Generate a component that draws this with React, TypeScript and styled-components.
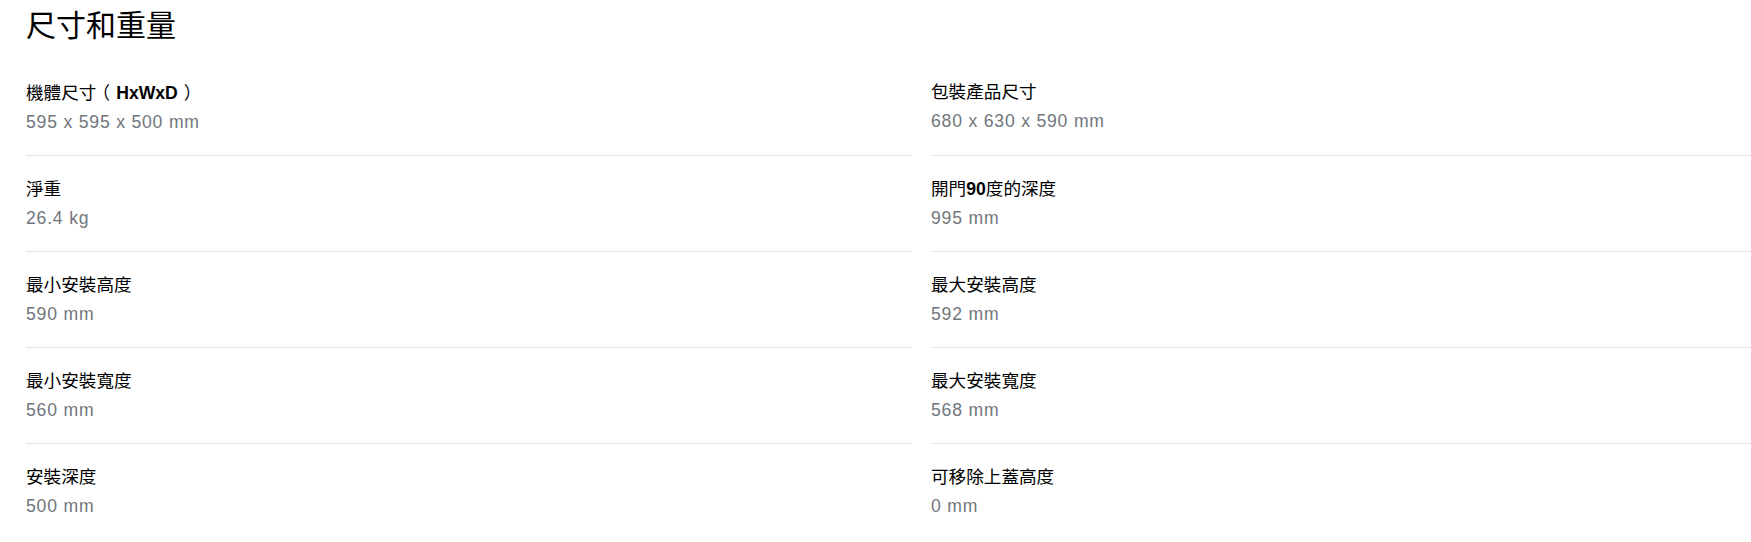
import styled, { createGlobalStyle } from "styled-components";

const GlobalStyle = createGlobalStyle`
  html, body {
    margin: 0;
    padding: 0;
    background: #fff;
    overflow: hidden;
  }
  body {
    font-family: "Liberation Sans", "Noto Sans CJK TC", sans-serif;
    color: #000;
  }
`;

const Section = styled.section`
  width: 1900px;
  padding: 6px 0 0 26px;
  box-sizing: border-box;
`;

const Title = styled.h2`
  margin: 0 0 13px;
  font-size: 30px;
  line-height: 40px;
  font-weight: 400;
  color: #000;
`;

const SpecGrid = styled.dl`
  display: grid;
  grid-template-columns: 885px 885px;
  column-gap: 20px;
  margin: 0;
`;

const SpecItem = styled.div<{ $last?: boolean }>`
  padding: 20px 0;
  border-bottom: ${(p) => (p.$last ? "none" : "1px solid #e0e2e5")};
  display: flex;
  flex-direction: column;
  gap: 3px;
`;

const Label = styled.dt`
  font-size: 17.6px;
  line-height: 26px;
  font-weight: 400;
  color: #000;
`;

const Strong = styled.b`
  font-weight: 700;
`;

// half-width bracket, padded so it sits centred like the reference
const Paren = styled.span<{ $close?: boolean }>`
  font-family: "Noto Sans CJK TC", sans-serif;
  font-feature-settings: "halt" 1;
  padding: ${(p) => (p.$close ? "0 0 0 6px" : "0 6px 0 5px")};
`;

const Value = styled.dd`
  margin: 0;
  font-size: 17.6px;
  line-height: 26px;
  color: #71767c;
  letter-spacing: 0.8px;
`;

type Spec = { label: React.ReactNode; value: string };

const specs: Spec[] = [
  {
    label: (
      <>
        機體尺寸<Paren>（</Paren>
        <Strong>HxWxD</Strong>
        <Paren $close>）</Paren>
      </>
    ),
    value: "595 x 595 x 500 mm",
  },
  { label: "包裝產品尺寸", value: "680 x 630 x 590 mm" },
  { label: "淨重", value: "26.4 kg" },
  {
    label: (
      <>
        開門<Strong>90</Strong>度的深度
      </>
    ),
    value: "995 mm",
  },
  { label: "最小安裝高度", value: "590 mm" },
  { label: "最大安裝高度", value: "592 mm" },
  { label: "最小安裝寬度", value: "560 mm" },
  { label: "最大安裝寬度", value: "568 mm" },
  { label: "安裝深度", value: "500 mm" },
  { label: "可移除上蓋高度", value: "0 mm" },
];

const App = () => {
  return (
    <>
      <GlobalStyle />
      <Section>
        <Title>尺寸和重量</Title>
        <SpecGrid>
          {specs.map((s, i) => (
            <SpecItem key={i} $last={i >= specs.length - 2}>
              <Label>{s.label}</Label>
              <Value>{s.value}</Value>
            </SpecItem>
          ))}
        </SpecGrid>
      </Section>
    </>
  );
};

export default App;
